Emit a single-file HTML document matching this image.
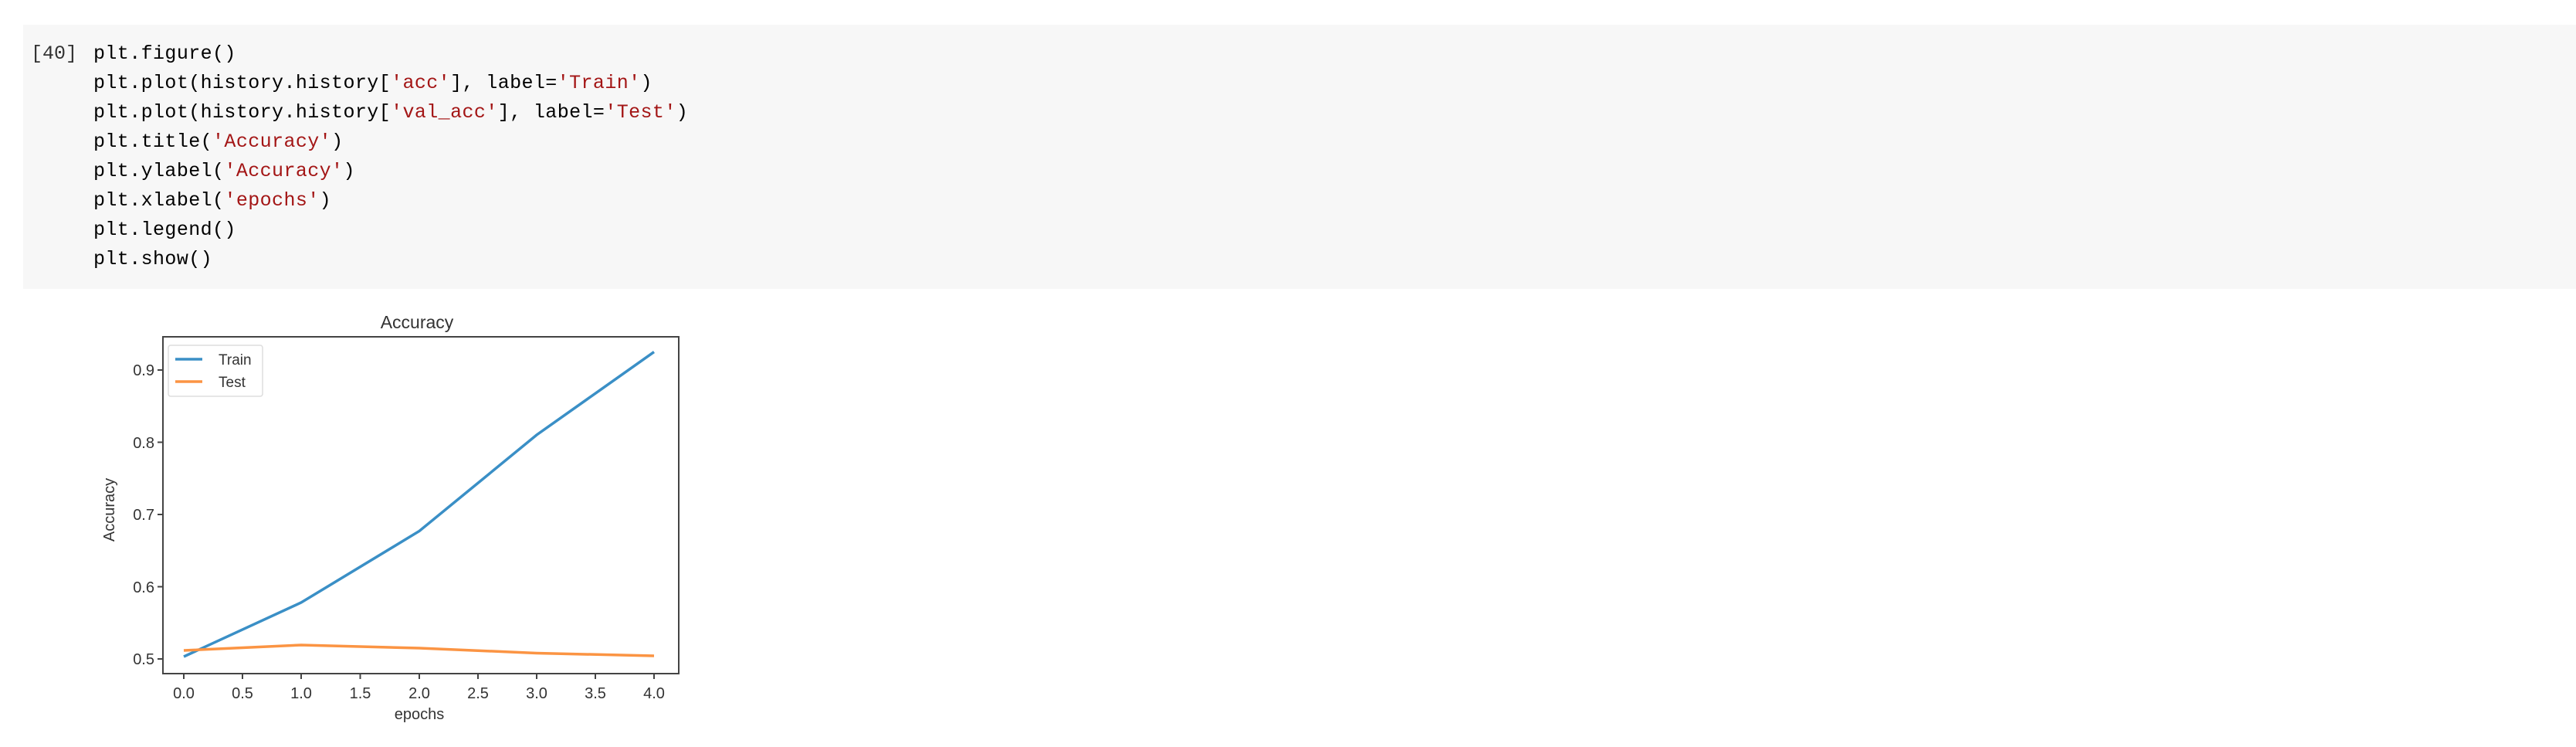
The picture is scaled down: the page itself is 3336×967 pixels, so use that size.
<!DOCTYPE html>
<html><head><meta charset="utf-8"><style>
body{margin:0;width:3336px;height:967px;background:#fff;position:relative;overflow:hidden}
.cell{position:absolute;left:30px;top:32px;width:3306px;height:342px;background:#f7f7f7}
.code{position:absolute;left:121px;top:51px;font-family:"Liberation Mono",monospace;font-size:25px;line-height:38px;color:#000;white-space:pre;letter-spacing:0.4px}
.num{position:absolute;left:40px;top:51px;font-family:"Liberation Mono",monospace;font-size:25px;line-height:38px;color:#333}
.s{color:#a31515}
</style></head><body>
<div class="cell"></div>
<div class="num">[40]</div>
<div class="code">plt.figure()
plt.plot(history.history[<span class="s">'acc'</span>], label=<span class="s">'Train'</span>)
plt.plot(history.history[<span class="s">'val_acc'</span>], label=<span class="s">'Test'</span>)
plt.title(<span class="s">'Accuracy'</span>)
plt.ylabel(<span class="s">'Accuracy'</span>)
plt.xlabel(<span class="s">'epochs'</span>)
plt.legend()
plt.show()</div>
<svg style="position:absolute;left:0;top:0" width="3336" height="967" font-family="Liberation Sans, sans-serif" fill="#333">
<text x="540" y="425" font-size="23" text-anchor="middle">Accuracy</text>
<rect x="211" y="436" width="668" height="436" fill="none" stroke="#444" stroke-width="2"/>
<g stroke="#444" stroke-width="2">
<line x1="211" x2="204" y1="853" y2="853"/><line x1="211" x2="204" y1="759.5" y2="759.5"/><line x1="211" x2="204" y1="666" y2="666"/><line x1="211" x2="204" y1="572.5" y2="572.5"/><line x1="211" x2="204" y1="479" y2="479"/>
<line x1="238" x2="238" y1="872" y2="879"/><line x1="314" x2="314" y1="872" y2="879"/><line x1="390" x2="390" y1="872" y2="879"/><line x1="466.5" x2="466.5" y1="872" y2="879"/><line x1="543" x2="543" y1="872" y2="879"/><line x1="619" x2="619" y1="872" y2="879"/><line x1="695" x2="695" y1="872" y2="879"/><line x1="771" x2="771" y1="872" y2="879"/><line x1="847" x2="847" y1="872" y2="879"/>
</g>
<g font-size="20" text-anchor="end">
<text x="200" y="860">0.5</text><text x="200" y="767">0.6</text><text x="200" y="673">0.7</text><text x="200" y="580">0.8</text><text x="200" y="486">0.9</text>
</g>
<g font-size="20" text-anchor="middle">
<text x="238" y="904">0.0</text><text x="314" y="904">0.5</text><text x="390" y="904">1.0</text><text x="466.5" y="904">1.5</text><text x="543" y="904">2.0</text><text x="619" y="904">2.5</text><text x="695" y="904">3.0</text><text x="771" y="904">3.5</text><text x="847" y="904">4.0</text>
<text x="543" y="931">epochs</text>
</g>
<text transform="translate(148,660) rotate(-90)" font-size="20" text-anchor="middle">Accuracy</text>
<polyline fill="none" stroke="#3a8fc6" stroke-width="3.5" points="238,850 390,780 543,687.5 695,563 847,455.6"/>
<polyline fill="none" stroke="#fb9443" stroke-width="3.5" points="238,842 390,835 543,839 695,845.5 847,849"/>
<rect x="218" y="447" width="122" height="66" rx="3" fill="#fff" fill-opacity="0.85" stroke="#ddd" stroke-width="1.5"/>
<line x1="227" x2="262" y1="465" y2="465" stroke="#3a8fc6" stroke-width="3.5"/>
<line x1="227" x2="262" y1="494" y2="494" stroke="#fb9443" stroke-width="3.5"/>
<text x="283" y="472" font-size="19">Train</text>
<text x="283" y="501" font-size="19">Test</text>
</svg>
</body></html>
